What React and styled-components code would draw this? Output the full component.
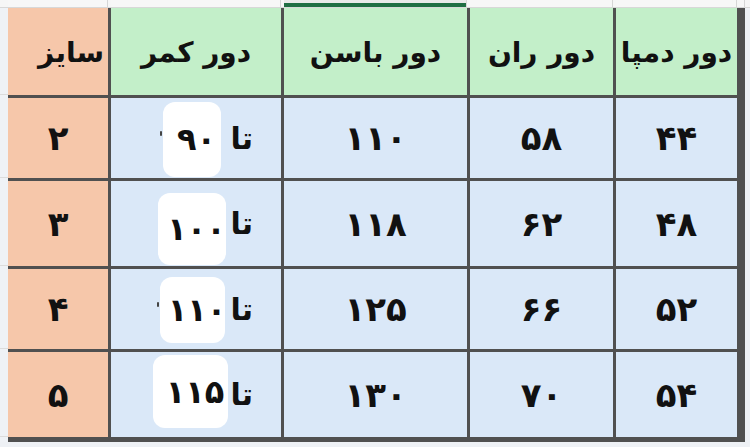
import { Fragment } from "react";
import styled, { createGlobalStyle } from "styled-components";

const GlobalStyle = createGlobalStyle`
  html, body {
    margin: 0;
    padding: 0;
    background: #f3f3f3;
  }
  body {
    font-family: "DejaVu Sans", sans-serif;
  }
`;

// sheet column widths (cells only), left to right
const COLS = "100px 170px 183px 143px 121px";
const ROWS = "87px 80px 85px 80px 85px";

const Frame = styled.div`
  width: 750px;
  height: 447px;
  overflow: hidden;
  display: grid;
  grid-template-columns: 8px auto 1fr;
  grid-template-rows: 8px auto 1fr;
  background: #f3f3f3;
`;

const Corner = styled.div`
  background: #f6f6f6;
  border-bottom: 1px solid #d8d8d8;
`;

const ColumnStrip = styled.div`
  display: grid;
  grid-template-columns: ${COLS} 5px;
  column-gap: 3px;
  background: #f6f6f6;
  border-bottom: 1px solid #d8d8d8;
`;

const ColumnHead = styled.div`
  border-right: 1px solid #d6d6d6;
  background: ${(p) => (p.$active ? "#e9e9e9" : "#f7f7f7")};
  box-shadow: ${(p) => (p.$active ? "inset 0 -4px 0 #1f6e43" : "none")};
`;

const Gutter = styled.div`
  background: #eff2f6;
  display: grid;
  grid-template-rows: ${ROWS};
  row-gap: 3px;
`;

const GutterCell = styled.div`
  border-bottom: 1px solid #dcdcdc;
`;

const Sheet = styled.div`
  display: grid;
  grid-template-columns: ${COLS};
  grid-template-rows: ${ROWS};
  gap: 3px;
  padding: 0 5px 5px 0;
  background: #505050;
`;

const Cell = styled.div`
  background: ${(p) => p.$bg};
  display: flex;
  align-items: center;
  justify-content: ${(p) => (p.$edge ? "flex-start" : "center")};
  padding-right: ${(p) => (p.$edge ? "4px" : "0")};
  color: #111;
  font-weight: bold;
  direction: rtl;
`;

const HeadText = styled.span`
  font-size: 28px;
  white-space: nowrap;
  letter-spacing: -0.6px;
  margin-top: 2px;
`;

const Num = styled.span`
  font-size: 34px;
  letter-spacing: ${(p) => p.$spread || 3}px;
`;

const WaistCell = styled(Cell)`
  justify-content: flex-start;
  padding-right: 28px;
`;

const Upto = styled.span`
  font-size: 30px;
`;

const Patch = styled.div`
  width: ${(p) => p.$w}px;
  height: ${(p) => p.$h}px;
  margin-top: ${(p) => p.$dy}px;
  margin-right: ${(p) => p.$gap}px;
  background: #fff;
  border-radius: 12px;
  display: flex;
  align-items: center;
  justify-content: center;
  padding-left: 8px;
  box-sizing: border-box;
`;

const PatchNum = styled.span`
  font-size: 32px;
  letter-spacing: -3px;
  white-space: nowrap;
`;

const Remnant = styled.span`
  width: 2px;
  height: 5px;
  margin-top: -10px;
  margin-right: 1px;
  background: #444;
  border-radius: 1px;
`;

const Side = styled.div`
  background: #eef1f5;
`;

const ORANGE = "#f6c7aa";
const GREEN = "#c3efc9";
const BLUE = "#dae8f8";

const headers = ["سایز", "دور کمر", "دور باسن", "دور ران", "دور دمپا"];

const rows = [
  { size: "۲", waist: "۹۰", patch: { w: 58, h: 75, dy: 2, gap: 9 }, rem: true, hip: "۱۱۰", thigh: "۵۸", hem: "۴۴" },
  { size: "۳", waist: "۱۰۰", patch: { w: 68, h: 72, dy: 11, gap: 4 }, rem: false, hip: "۱۱۸", thigh: "۶۲", hem: "۴۸" },
  { size: "۴", waist: "۱۱۰", patch: { w: 65, h: 66, dy: 2, gap: 5 }, rem: true, hip: "۱۲۵", thigh: "۶۶", hem: "۵۲" },
  { size: "۵", waist: "۱۱۵", patch: { w: 75, h: 73, dy: -6, gap: 2 }, rem: false, hip: "۱۳۰", thigh: "۷۰", hem: "۵۴" },
];

export default function App() {
  return (
    <>
      <GlobalStyle />
      <Frame>
        <Corner />
        <ColumnStrip>
          {headers.map((h, i) => (
            <ColumnHead key={h} $active={i === 2} />
          ))}
          <ColumnHead />
        </ColumnStrip>
        <Corner />

        <Gutter>
          {[0, 1, 2, 3, 4].map((i) => (
            <GutterCell key={i} />
          ))}
        </Gutter>
        <Sheet>
          {headers.map((h, i) => (
            <Cell key={h} $bg={i === 0 ? ORANGE : GREEN} $edge={i === 0}>
              <HeadText>{h}</HeadText>
            </Cell>
          ))}
          {rows.map((r) => (
            <Fragment key={r.size}>
              <Cell $bg={ORANGE}>
                <Num>{r.size}</Num>
              </Cell>
              <WaistCell $bg={BLUE}>
                <Upto>تا</Upto>
                <Patch $w={r.patch.w} $h={r.patch.h} $dy={r.patch.dy} $gap={r.patch.gap}>
                  <PatchNum>{r.waist}</PatchNum>
                </Patch>
                {r.rem && <Remnant />}
              </WaistCell>
              <Cell $bg={BLUE}>
                <Num $spread={5}>{r.hip}</Num>
              </Cell>
              <Cell $bg={BLUE}>
                <Num $spread={4}>{r.thigh}</Num>
              </Cell>
              <Cell $bg={BLUE}>
                <Num $spread={3}>{r.hem}</Num>
              </Cell>
            </Fragment>
          ))}
        </Sheet>
        <Side />

        <Side />
        <Side />
        <Side />
      </Frame>
    </>
  );
}
